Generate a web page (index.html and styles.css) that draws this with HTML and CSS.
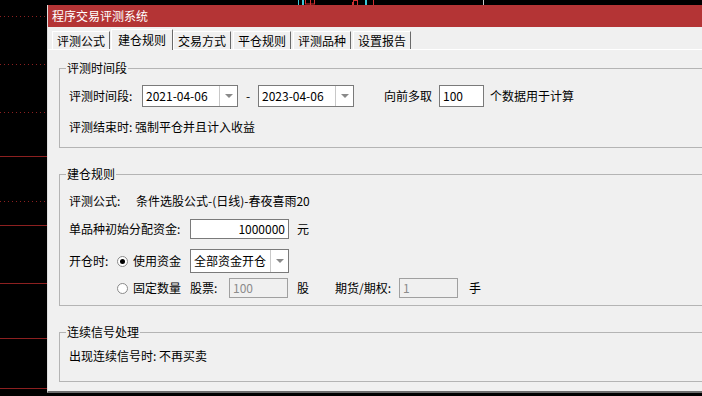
FILE: index.html
```html
<!DOCTYPE html>
<html lang="zh-CN">
<head>
    <meta charset="UTF-8">
    <title>程序交易评测系统</title>
    <link rel="stylesheet" href="styles.css">
</head>
<body>
    <div class="screen">
        <div class="chart-left">
            <svg width="47" height="396" viewBox="0 0 47 396">
                <g stroke="#8c2020" stroke-width="1" stroke-dasharray="1 3">
                    <line x1="0" y1="16.5" x2="47" y2="16.5"/>
                    <line x1="0" y1="64.5" x2="47" y2="64.5"/>
                    <line x1="0" y1="112.5" x2="47" y2="112.5"/>
                    <line x1="0" y1="201.5" x2="47" y2="201.5"/>
                </g>
                <g stroke="#8c2020" stroke-width="1">
                    <line x1="0" y1="156.5" x2="47" y2="156.5"/>
                    <line x1="0" y1="225.5" x2="47" y2="225.5"/>
                    <line x1="0" y1="283.5" x2="47" y2="283.5"/>
                    <line x1="0" y1="338.5" x2="47" y2="338.5"/>
                    <line x1="0" y1="388.5" x2="47" y2="388.5"/>
                </g>
            </svg>
        </div>
        <div class="right">
            <div class="strip">
                <svg width="655" height="5" viewBox="47 0 655 5">
                    <rect x="298" y="0" width="1" height="5" fill="#3cc8d8"/>
                    <rect x="302" y="0" width="2" height="5" fill="#3cc8d8"/>
                    <rect x="305.5" y="-1" width="9" height="5" fill="none" stroke="#d23030"/>
                    <rect x="310" y="0" width="1" height="5" fill="#d23030"/>
                    <rect x="352" y="2" width="1" height="3" fill="#d23030"/>
                    <rect x="353.5" y="0.5" width="4" height="5" fill="none" stroke="#d23030"/>
                    <rect x="365" y="0" width="2" height="5" fill="#3cc8d8"/>
                    <rect x="373" y="0" width="1" height="5" fill="#d23030"/>
                    <rect x="483" y="0" width="1" height="5" fill="#c8c8c8"/>
                </svg>
            </div>
            <div class="window">
                <div class="titlebar">程序交易评测系统</div>
                <div class="tabs">
                    <span class="tab">评测公式</span>
                    <span class="tab active">建仓规则</span>
                    <span class="tab">交易方式</span>
                    <span class="tab">平仓规则</span>
                    <span class="tab">评测品种</span>
                    <span class="tab">设置报告</span>
                </div>
                <div class="panel">
                    <div class="group group-time">
                        <div class="legend">评测时间段</div>
                        <div class="row row-dates">
                            <span class="label w-date">评测时间段:</span>
                            <span class="combo date">
                                <span class="combo-text">2021-04-06</span>
                                <span class="combo-btn"><i class="arrow"></i></span>
                            </span>
                            <span class="dash">-</span>
                            <span class="combo date">
                                <span class="combo-text">2023-04-06</span>
                                <span class="combo-btn"><i class="arrow"></i></span>
                            </span>
                            <span class="label pre">向前多取</span>
                            <span class="input count">100</span>
                            <span class="label after">个数据用于计算</span>
                        </div>
                        <div class="row row-end">
                            <span class="label">评测结束时: 强制平仓并且计入收益</span>
                        </div>
                    </div>

                    <div class="group group-open">
                        <div class="legend">建仓规则</div>
                        <div class="row row-formula">
                            <span class="label w-formula">评测公式:</span>
                            <span class="label">条件选股公式-(日线)-春夜喜雨20</span>
                        </div>
                        <div class="row row-fund">
                            <span class="label w-fund">单品种初始分配资金:</span>
                            <span class="input money">1000000</span>
                            <span class="label unit">元</span>
                        </div>
                        <div class="row row-mode">
                            <span class="label w-open">开仓时:</span>
                            <span class="radio checked"></span>
                            <span class="label w-radio">使用资金</span>
                            <span class="combo mode">
                                <span class="combo-text">全部资金开仓</span>
                                <span class="combo-btn"><i class="arrow"></i></span>
                            </span>
                        </div>
                        <div class="row row-fixed">
                            <span class="radio"></span>
                            <span class="label w-radio">固定数量</span>
                            <span class="label w-stock">股票:</span>
                            <span class="input disabled small">100</span>
                            <span class="label unit w-unit">股</span>
                            <span class="label w-fut">期货/期权:</span>
                            <span class="input disabled small">1</span>
                            <span class="label hand">手</span>
                        </div>
                    </div>

                    <div class="group group-signal">
                        <div class="legend">连续信号处理</div>
                        <div class="row row-signal">
                            <span class="label">出现连续信号时: 不再买卖</span>
                        </div>
                    </div>
                </div>
            </div>
        </div>
    </div>
</body>
</html>
```

FILE: styles.css
```css
html, body {
    margin: 0;
    padding: 0;
    background: #000;
    overflow: hidden;
}
body {
    font-family: "Noto Sans CJK SC", "Microsoft YaHei", sans-serif;
    font-size: 12px;
    line-height: 16px;
    color: #000;
}
.screen {
    display: flex;
    width: 100%;
    height: 396px;
    overflow: hidden;
}
.chart-left {
    width: 47px;
    flex: none;
}
.chart-left svg, .strip svg {
    display: block;
}
.right {
    flex: 1;
    min-width: 0;
    display: flex;
    flex-direction: column;
}
.strip {
    height: 5px;
    overflow: hidden;
}
.window {
    height: 388px;
    background: #f0f0f0;
    border-left: 1px solid #dedede;
    border-bottom: 2px solid #6e6e6e;
    box-sizing: border-box;
    overflow: hidden;
}
.titlebar {
    height: 22px;
    line-height: 21px;
    background: #b43435;
    color: #fff;
    padding-left: 4px;
    font-size: 12px;
}
.tabs {
    display: flex;
    align-items: flex-end;
    height: 22px;
    padding-left: 4px;
    box-sizing: border-box;
}
.tab {
    height: 18px;
    line-height: 18px;
    padding: 0 4px 0 4px;
    margin-right: 2px;
    border-left: 1px solid #fff;
    border-top: 1px solid #fff;
    border-right: 1px solid #6a6a6a;
    box-sizing: border-box;
    color: #000;
}
.tab.active {
    height: 21px;
    line-height: 19px;
    padding: 0 6px 0 6px;
    margin: 0 0 -1px -1px;
    background: #f0f0f0;
    position: relative;
    z-index: 1;
}
.tab.active + .tab {
    margin-left: 0;
}
.panel {
    border-top: 1px solid #fff;
    padding: 10px 0 0 11px;
    margin-right: -200px;
    display: flex;
    flex-direction: column;
    gap: 18px;
}
/* the group boxes run on past the right edge of the screen */
.group {
    margin-top: 8px;
    border: 1px solid #b4b4b4;
    padding: 0 0 0 6px;
    box-sizing: border-box;
}
.group .legend {
    display: inline-block;
    margin-top: -9px;
    padding: 0 1px;
    line-height: 16px;
    background: #f0f0f0;
    vertical-align: top;
}
.row {
    display: flex;
    align-items: center;
    padding-left: 3px;
}
.label {
    white-space: nowrap;
}
.combo {
    display: flex;
    background: #fff;
    border: 1px solid #7a7a7a;
    box-sizing: border-box;
}
.combo-text {
    flex: 1;
    padding-left: 3px;
    display: flex;
    align-items: center;
}
.combo-btn {
    width: 17px;
    border-left: 1px solid #c8c8c8;
    display: flex;
    align-items: center;
    justify-content: center;
}
.arrow {
    width: 0;
    height: 0;
    border-left: 4px solid transparent;
    border-right: 4px solid transparent;
    border-top: 4px solid #8a8a8a;
}
.input {
    display: flex;
    align-items: center;
    background: #fff;
    border: 1px solid #7a7a7a;
    box-sizing: border-box;
    padding: 0 3px;
}
.input.disabled {
    background: #f0f0f0;
    border-color: #a0a0a0;
    color: #8c8c8c;
}

/* group 1: border 68..147 */
.group-time {
    height: 80px;
}
.row-dates {
    margin-top: 0;
    height: 22px;
}
.w-date { width: 73px; }
.combo.date {
    width: 96px;
    height: 22px;
}
.dash {
    width: 20px;
    text-align: center;
}
.pre { margin-left: 30px; }
.input.count {
    width: 45px;
    height: 22px;
    margin-left: 7px;
}
.after { margin-left: 6px; }
.row-end { margin-top: 12px; }

/* group 2: border 174..305 */
.group-open {
    height: 132px;
}
.row-formula { margin-top: 2px; }
.w-formula { width: 67px; }
.row-fund {
    margin-top: 10px;
    height: 20px;
}
.w-fund { width: 121px; }
.input.money {
    width: 99px;
    height: 20px;
    justify-content: flex-end;
}
.unit { margin-left: 8px; }
.row-mode {
    margin-top: 10px;
    height: 24px;
}
.w-open { width: 48px; }
.radio {
    width: 11px;
    height: 11px;
    border-radius: 50%;
    border: 1px solid #8a8a8a;
    background: #fff;
    box-sizing: border-box;
    display: flex;
    align-items: center;
    justify-content: center;
}
.radio.checked::after {
    content: "";
    width: 5px;
    height: 5px;
    border-radius: 50%;
    background: #000;
}
.w-radio {
    margin-left: 5px;
    width: 57px;
}
.combo.mode {
    width: 99px;
    height: 24px;
}
.row-fixed {
    margin-top: 5px;
    height: 20px;
    padding-left: 51px;
}
.w-stock { width: 39px; }
.input.small {
    width: 59px;
    height: 20px;
}
.w-unit { width: 38px; margin-left: 9px; }
.w-fut { width: 64px; }
.hand { margin-left: 11px; }

/* group 3: border 332..381 */
.group-signal {
    height: 50px;
}
.row-signal { margin-top: -1px; }
```
